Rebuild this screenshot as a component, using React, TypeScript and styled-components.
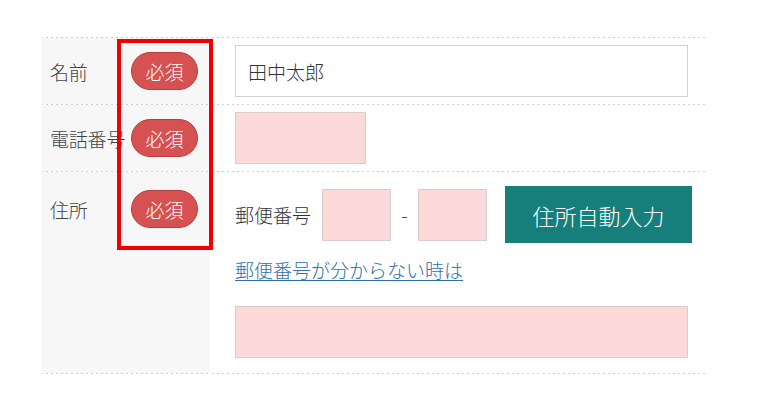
import React from 'react';
import styled, {createGlobalStyle} from 'styled-components';

const GlobalStyle = createGlobalStyle`
  body {
    margin: 0;
    background: #ffffff;
    font-family: "Noto Sans CJK JP", "Noto Sans", sans-serif;
    font-weight: 300;
    color: #333333;
  }
`;

const dots = 'repeating-linear-gradient(to right, #cfcfcf 0 2px, transparent 2px 5px) 1';

const Page = styled.div`
  padding: 37px 0 0 42px;
`;

const Table = styled.div`
  position: relative;
  width: 666px;
  border-style: solid;
  border-width: 0 0 1px 0;
  border-image: ${dots};
`;

const Row = styled.div`
  display: grid;
  grid-template-columns: 168px 1fr;
  border-style: solid;
  border-width: 1px 0 0 0;
  border-image: ${dots};
`;

const LabelCell = styled.div<{$top?: boolean}>`
  background: #f7f7f7;
  display: flex;
  align-items: ${p => (p.$top ? 'flex-start' : 'center')};
  padding: ${p => (p.$top ? '18px 12px 0 8px' : '0 12px 0 8px')};
`;

const LabelInner = styled.div`
  flex: 1;
  display: flex;
  align-items: center;
  justify-content: space-between;
`;

const LabelText = styled.span`
  font-size: 19px;
  color: #444444;
  white-space: nowrap;
  letter-spacing: -0.2px;
`;

const Required = styled.span`
  display: inline-flex;
  align-items: center;
  justify-content: center;
  width: 67px;
  height: 38px;
  box-sizing: border-box;
  border-radius: 19px;
  background: #d65252;
  border: 1px solid #b53f3f;
  color: #ffffff;
  font-size: 19px;
  flex-shrink: 0;
`;

const FieldCell = styled.div<{$pad?: string}>`
  padding: ${p => p.$pad || '7px 20px 7px 25px'};
  display: flex;
  flex-direction: column;
  align-items: flex-start;
`;

const Input = styled.div<{$w?: string; $pink?: boolean}>`
  width: ${p => p.$w || '100%'};
  height: 52px;
  box-sizing: border-box;
  border: 1px solid ${p => (p.$pink ? '#dccccc' : '#d2d2d2')};
  background: ${p => (p.$pink ? '#fcd9d9' : '#ffffff')};
  padding-left: 12px;
  display: flex;
  align-items: center;
  font-size: 19px;
  color: #333333;
`;

const ZipLine = styled.div`
  display: flex;
  align-items: center;
  font-size: 19px;
`;

const ZipLabel = styled.span`
  margin-right: 11px;
  color: #333333;
`;

const Dash = styled.span`
  width: 27px;
  text-align: center;
  color: #444444;
`;

const AutoButton = styled.button`
  margin-left: 18px;
  width: 187px;
  height: 57px;
  border: none;
  background: #167f7b;
  color: #ffffff;
  font-family: inherit;
  font-weight: 300;
  font-size: 22px;
  padding: 0;
`;

const HelpLink = styled.a`
  margin-top: 12px;
  line-height: 30px;
  font-size: 19px;
  color: #2f6fae;
  text-decoration: underline;
  text-underline-offset: 2px;
  text-decoration-thickness: 1px;
`;

const Spacer = styled.div`
  height: 21px;
`;

const Highlight = styled.div`
  position: absolute;
  left: 75px;
  top: 2px;
  width: 96px;
  height: 211px;
  box-sizing: border-box;
  border: 4px solid #f00000;
  pointer-events: none;
`;

export default function App() {
  return (
    <Page>
      <GlobalStyle />
      <Table>
        <Row>
          <LabelCell>
            <LabelInner>
              <LabelText>名前</LabelText>
              <Required>必須</Required>
            </LabelInner>
          </LabelCell>
          <FieldCell>
            <Input>田中太郎</Input>
          </FieldCell>
        </Row>
        <Row>
          <LabelCell>
            <LabelInner>
              <LabelText>電話番号</LabelText>
              <Required>必須</Required>
            </LabelInner>
          </LabelCell>
          <FieldCell>
            <Input $w="131px" $pink />
          </FieldCell>
        </Row>
        <Row>
          <LabelCell $top>
            <LabelInner>
              <LabelText>住所</LabelText>
              <Required>必須</Required>
            </LabelInner>
          </LabelCell>
          <FieldCell $pad="14px 15px 15px 25px">
            <ZipLine>
              <ZipLabel>郵便番号</ZipLabel>
              <Input $w="69px" $pink />
              <Dash>-</Dash>
              <Input $w="69px" $pink />
              <AutoButton>住所自動入力</AutoButton>
            </ZipLine>
            <HelpLink href="#">郵便番号が分からない時は</HelpLink>
            <Spacer />
            <Input $w="453px" $pink />
          </FieldCell>
        </Row>
        <Highlight />
      </Table>
    </Page>
  );
}
